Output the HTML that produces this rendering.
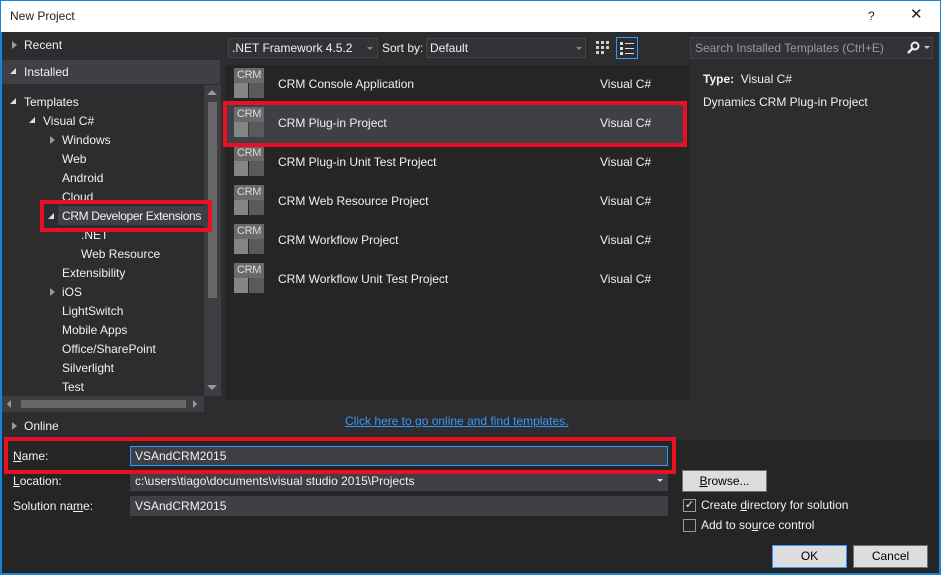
<!DOCTYPE html>
<html><head><style>
*{margin:0;padding:0;box-sizing:border-box}
body{width:941px;height:575px;position:relative;overflow:hidden;background:#252526;font-family:"Segoe UI","Liberation Sans",sans-serif;font-size:12px;color:#f1f1f1}
.a{position:absolute}
.t{position:absolute;white-space:nowrap;line-height:16px}
.tri{position:absolute;width:0;height:0}
.r{border-top:4px solid transparent;border-bottom:4px solid transparent;border-left:5px solid #999}
.d{border-left:6px solid transparent;border-bottom:6px solid #ddd}
.ico{position:absolute;width:30px;height:30px}
.ico .top{position:absolute;left:0;top:0;width:30px;height:15px;background:#6a6a6a;color:#ddd;font-size:11px;line-height:15px;text-align:center;letter-spacing:-.3px}
.ico .bl{position:absolute;left:0;top:15px;width:14px;height:15px;background:#858585}
.ico .br{position:absolute;left:15px;top:15px;width:15px;height:15px;background:#5a5a5a}
.btn{position:absolute;background:#dddddd;border:1px solid #707070;color:#000;text-align:center;line-height:20px}
.inp{position:absolute;background:#3f3f46;border:1px solid #3f3f46;color:#f1f1f1;padding-left:4px;line-height:18px}
.redbox{position:absolute;border:4px solid #e81123}
</style></head><body>
<div class="a" style="left:0;top:0;width:941px;height:32px;background:#fff;border:1px solid #1883d7;border-bottom:none"></div>
<div class="t" style="left:10px;top:8px;color:#222;font-size:12px">New Project</div>
<div class="t" style="left:868px;top:8px;color:#222">?</div>
<div class="t" style="left:910px;top:7px;color:#222;font-size:15px">✕</div>
<div class="a" style="left:0;top:32px;width:2px;height:543px;background:#1883d7"></div>
<div class="a" style="left:939px;top:32px;width:2px;height:543px;background:#1883d7"></div>
<div class="a" style="left:0;top:573px;width:941px;height:2px;background:#1883d7"></div>
<div class="a" style="left:2px;top:32px;width:937px;height:408px;background:#2d2d30"></div>
<div class="tri r" style="left:12px;top:41px"></div><div class="t" style="left:24px;top:37px">Recent</div>
<div class="a" style="left:2px;top:60px;width:218px;height:24px;background:#3f3f46"></div>
<div class="tri d" style="left:10px;top:68px"></div><div class="t" style="left:24px;top:64px">Installed</div>
<div class="tri d" style="left:10px;top:98px"></div><div class="t" style="left:24px;top:94px">Templates</div>
<div class="tri d" style="left:29px;top:117px"></div><div class="t" style="left:43px;top:113px">Visual C#</div>
<div class="tri r" style="left:50px;top:136px"></div><div class="t" style="left:62px;top:132px">Windows</div>
<div class="t" style="left:62px;top:151px">Web</div>
<div class="t" style="left:62px;top:170px">Android</div>
<div class="t" style="left:62px;top:189px">Cloud</div>
<div class="a" style="left:58px;top:206px;width:146px;height:19px;background:#3f3f46"></div>
<div class="tri d" style="left:48px;top:213px"></div><div class="t" style="left:62px;top:208px;letter-spacing:-0.35px">CRM Developer Extensions</div>
<div class="t" style="left:81px;top:227px">.NET</div>
<div class="t" style="left:81px;top:246px">Web Resource</div>
<div class="t" style="left:62px;top:265px">Extensibility</div>
<div class="tri r" style="left:50px;top:288px"></div><div class="t" style="left:62px;top:284px">iOS</div>
<div class="t" style="left:62px;top:303px">LightSwitch</div>
<div class="t" style="left:62px;top:322px">Mobile Apps</div>
<div class="t" style="left:62px;top:341px">Office/SharePoint</div>
<div class="t" style="left:62px;top:360px">Silverlight</div>
<div class="t" style="left:62px;top:379px;height:17px;overflow:hidden">Test</div>
<div class="a" style="left:204px;top:85px;width:17px;height:311px;background:#3e3e42"></div>
<div class="a" style="left:208px;top:102px;width:9px;height:196px;background:#686868"></div>
<div class="tri" style="left:207px;top:90px;border-left:5px solid transparent;border-right:5px solid transparent;border-bottom:5px solid #999"></div>
<div class="tri" style="left:207px;top:385px;border-left:5px solid transparent;border-right:5px solid transparent;border-top:5px solid #999"></div>
<div class="a" style="left:2px;top:396px;width:202px;height:16px;background:#3e3e42"></div>
<div class="a" style="left:21px;top:400px;width:165px;height:8px;background:#686868"></div>
<div class="tri" style="left:7px;top:400px;border-top:4px solid transparent;border-bottom:4px solid transparent;border-right:4px solid #999"></div>
<div class="tri" style="left:193px;top:400px;border-top:4px solid transparent;border-bottom:4px solid transparent;border-left:4px solid #999"></div>
<div class="tri r" style="left:12px;top:422px"></div><div class="t" style="left:24px;top:418px">Online</div>
<div class="a" style="left:228px;top:38px;width:150px;height:20px;background:#333337;border:1px solid #434346"></div>
<div class="t" style="left:232px;top:40px">.NET Framework 4.5.2</div>
<div class="tri" style="left:367px;top:47px;border-left:3px solid transparent;border-right:3px solid transparent;border-top:3px solid #888"></div>
<div class="t" style="left:382px;top:40px">Sort by:</div>
<div class="a" style="left:426px;top:38px;width:160px;height:20px;background:#333337;border:1px solid #434346"></div>
<div class="t" style="left:430px;top:40px">Default</div>
<div class="tri" style="left:576px;top:47px;border-left:3px solid transparent;border-right:3px solid transparent;border-top:3px solid #888"></div>
<svg class="a" style="left:594px;top:39px" width="16" height="18"><g fill="#ccc"><rect x="2" y="2" width="3" height="3"/><rect x="7" y="2" width="3" height="3"/><rect x="12" y="2" width="3" height="3"/><rect x="2" y="7" width="3" height="3"/><rect x="7" y="7" width="3" height="3"/><rect x="12" y="7" width="3" height="3"/><rect x="2" y="12" width="3" height="3"/><rect x="7" y="12" width="3" height="3"/></g></svg>
<div class="a" style="left:616px;top:37px;width:22px;height:22px;border:1px solid #3399ff"></div>
<svg class="a" style="left:618px;top:39px" width="18" height="18"><g fill="#ddd"><rect x="2" y="3" width="3" height="3"/><rect x="7" y="4" width="9" height="1"/><rect x="2" y="8" width="3" height="3"/><rect x="7" y="9" width="9" height="1"/><rect x="2" y="13" width="3" height="3"/><rect x="7" y="14" width="9" height="1"/></g></svg>
<div class="a" style="left:690px;top:37px;width:243px;height:22px;background:#333337;border:1px solid #434346"></div>
<div class="t" style="left:695px;top:40px;color:#999">Search Installed Templates (Ctrl+E)</div>
<svg class="a" style="left:906px;top:40px" width="26" height="16"><circle cx="9" cy="6" r="3.5" stroke="#eee" stroke-width="2" fill="none"/><path d="M6.5 8.5L2 13" stroke="#eee" stroke-width="2.5"/><path d="M18 6h6l-3 3z" fill="#ccc"/></svg>
<div class="a" style="left:225px;top:65px;width:465px;height:335px;background:#252526"></div>
<div class="a" style="left:225px;top:104px;width:460px;height:39px;background:#3f3f46"></div>
<div class="ico" style="left:234px;top:68px"><div class="top">CRM</div><div class="bl"></div><div class="br"></div></div>
<div class="t" style="left:278px;top:76px">CRM Console Application</div><div class="t" style="left:600px;top:76px">Visual C#</div>
<div class="ico" style="left:234px;top:107px"><div class="top">CRM</div><div class="bl"></div><div class="br"></div></div>
<div class="t" style="left:278px;top:115px">CRM Plug-in Project</div><div class="t" style="left:600px;top:115px">Visual C#</div>
<div class="ico" style="left:234px;top:146px"><div class="top">CRM</div><div class="bl"></div><div class="br"></div></div>
<div class="t" style="left:278px;top:154px">CRM Plug-in Unit Test Project</div><div class="t" style="left:600px;top:154px">Visual C#</div>
<div class="ico" style="left:234px;top:185px"><div class="top">CRM</div><div class="bl"></div><div class="br"></div></div>
<div class="t" style="left:278px;top:193px">CRM Web Resource Project</div><div class="t" style="left:600px;top:193px">Visual C#</div>
<div class="ico" style="left:234px;top:224px"><div class="top">CRM</div><div class="bl"></div><div class="br"></div></div>
<div class="t" style="left:278px;top:232px">CRM Workflow Project</div><div class="t" style="left:600px;top:232px">Visual C#</div>
<div class="ico" style="left:234px;top:263px"><div class="top">CRM</div><div class="bl"></div><div class="br"></div></div>
<div class="t" style="left:278px;top:271px">CRM Workflow Unit Test Project</div><div class="t" style="left:600px;top:271px">Visual C#</div>
<div class="t" style="left:703px;top:71px"><b>Type:</b>&nbsp; Visual C#</div>
<div class="t" style="left:703px;top:94px">Dynamics CRM Plug-in Project</div>
<div class="t" style="left:345px;top:413px;color:#3399ff;text-decoration:underline">Click here to go online and find templates.</div>
<div class="t" style="left:13px;top:448px"><u>N</u>ame:</div>
<div class="inp" style="left:130px;top:446px;width:538px;height:20px;border-color:#3399ff">VSAndCRM2015</div>
<div class="t" style="left:13px;top:473px"><u>L</u>ocation:</div>
<div class="inp" style="left:130px;top:471px;width:538px;height:20px">c:\users\tiago\documents\visual studio 2015\Projects</div>
<div class="tri" style="left:657px;top:479px;border-left:3px solid transparent;border-right:3px solid transparent;border-top:3px solid #ddd"></div>
<div class="t" style="left:13px;top:498px">Solution na<u>m</u>e:</div>
<div class="inp" style="left:130px;top:496px;width:538px;height:20px">VSAndCRM2015</div>
<div class="btn" style="left:682px;top:470px;width:85px;height:22px"><u>B</u>rowse...</div>
<div class="a" style="left:683px;top:499px;width:13px;height:13px;border:1px solid #999;color:#eee;font-size:11px;line-height:11px;text-align:center">✓</div>
<div class="t" style="left:701px;top:497px">Create <u>d</u>irectory for solution</div>
<div class="a" style="left:683px;top:519px;width:13px;height:13px;border:1px solid #999"></div>
<div class="t" style="left:701px;top:517px">Add to so<u>u</u>rce control</div>
<div class="btn" style="left:772px;top:545px;width:75px;height:23px;border-color:#3399ff">OK</div>
<div class="btn" style="left:853px;top:545px;width:75px;height:23px">Cancel</div>
<div class="redbox" style="left:223px;top:101px;width:464px;height:46px"></div>
<div class="redbox" style="left:40px;top:200px;width:172px;height:32px"></div>
<div class="redbox" style="left:4px;top:437px;width:672px;height:37px"></div>
</body></html>
